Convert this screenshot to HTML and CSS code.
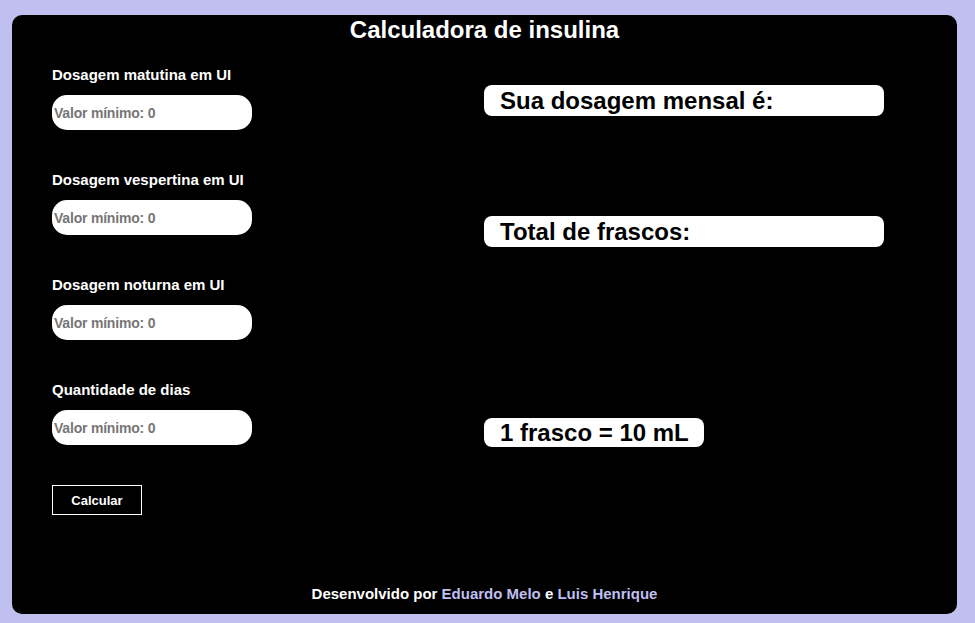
FILE: index.html
```html
<!DOCTYPE html>
<html lang="pt-BR">
<head>
<meta charset="utf-8">
<title>Calculadora de insulina</title>
<link rel="stylesheet" href="styles.css">
</head>
<body>
<main class="panel">
  <h1 class="title">Calculadora de insulina</h1>
  <div class="columns">
    <form class="form">
      <div class="field">
        <label class="label">Dosagem matutina em UI</label>
        <input class="input" type="text" placeholder="Valor mínimo: 0">
      </div>
      <div class="field">
        <label class="label">Dosagem vespertina em UI</label>
        <input class="input" type="text" placeholder="Valor mínimo: 0">
      </div>
      <div class="field">
        <label class="label">Dosagem noturna em UI</label>
        <input class="input" type="text" placeholder="Valor mínimo: 0">
      </div>
      <div class="field">
        <label class="label">Quantidade de dias</label>
        <input class="input" type="text" placeholder="Valor mínimo: 0">
      </div>
      <button class="button" type="button">Calcular</button>
    </form>
    <section class="results">
      <div class="result result-wide r1">Sua dosagem mensal é:</div>
      <div class="result result-wide r2">Total de frascos:</div>
      <div class="result result-small r3">1 frasco = 10 mL</div>
    </section>
  </div>
  <footer class="footer">Desenvolvido por <span class="name">Eduardo Melo</span> e <span class="name">Luis Henrique</span></footer>
</main>
</body>
</html>
```

FILE: styles.css
```css
html, body {
  margin: 0;
  padding: 0;
}
body {
  background: #bfbff0;
  font-family: "Liberation Sans", Arial, sans-serif;
  height: 623px;
  overflow: hidden;
}
.panel {
  box-sizing: border-box;
  margin: 15px 18px 0 12px;
  height: 599px;
  background: #000;
  border-radius: 10px;
  color: #fff;
  display: flex;
  flex-direction: column;
  padding: 0 40px;
}
.title {
  margin: 0;
  text-align: center;
  font-size: 24px;
  font-weight: bold;
  line-height: 29px;
}
.columns {
  display: flex;
  flex: 1;
  margin-top: 22px;
}
.form {
  width: 432px;
  display: flex;
  flex-direction: column;
  gap: 41px;
}
.field {
  display: flex;
  flex-direction: column;
}
.label {
  font-size: 15px;
  font-weight: bold;
  line-height: 17px;
  margin-bottom: 12px;
}
.input {
  box-sizing: border-box;
  width: 200px;
  height: 35px;
  border: none;
  border-radius: 15px;
  background: #fff;
  padding: 0 2px;
  font-family: "Liberation Sans", Arial, sans-serif;
  font-size: 14px;
  letter-spacing: -0.2px;
  font-weight: bold;
  outline: none;
}
.input::placeholder {
  color: #767676;
}
.button {
  box-sizing: border-box;
  width: 90px;
  height: 30px;
  margin-top: -1px;
  background: #000;
  color: #fff;
  border: 1px solid #fff;
  font-family: "Liberation Sans", Arial, sans-serif;
  font-size: 13px;
  font-weight: bold;
  padding: 0;
}
.results {
  display: flex;
  flex-direction: column;
  align-items: flex-start;
  padding-top: 19px;
}
.result {
  box-sizing: border-box;
  background: #fff;
  color: #000;
  border-radius: 8px;
  font-size: 24px;
  font-weight: bold;
  line-height: 31px;
  height: 31px;
  padding-left: 16px;
}
.result-wide {
  width: 400px;
}
.result-small {
  width: 220px;
  height: 29px;
  line-height: 29px;
}
.r2 {
  margin-top: 100px;
}
.r3 {
  margin-top: 171px;
}
.footer {
  text-align: center;
  font-size: 15px;
  font-weight: bold;
  line-height: 17px;
  padding-bottom: 12px;
}
.name {
  color: #bfbff0;
}
```
